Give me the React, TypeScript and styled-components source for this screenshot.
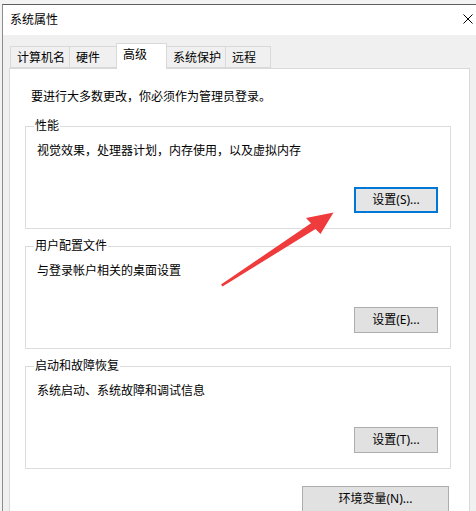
import React from 'react'
import styled, { createGlobalStyle } from 'styled-components'

const GlobalStyle = createGlobalStyle`
    html, body {
        margin: 0;
        padding: 0;
        background: #f3f3f3;
    }
    body {
        font-family: "Noto Sans", "Noto Sans CJK SC", sans-serif;
        font-size: 12px;
        color: #000;
    }
`

const tabs = [
    { label: '计算机名', width: 60 },
    { label: '硬件', width: 48 },
    { label: '高级', width: 51, active: true },
    { label: '系统保护', width: 60 },
    { label: '远程', width: 46 },
]

const groups = [
    { title: '性能', desc: '视觉效果，处理器计划，内存使用，以及虚拟内存', button: '设置(S)...', primary: true },
    { title: '用户配置文件', desc: '与登录帐户相关的桌面设置', button: '设置(E)...' },
    { title: '启动和故障恢复', desc: '系统启动、系统故障和调试信息', button: '设置(T)...' },
]

const App: React.FC = () => {
    return (
        <>
            <GlobalStyle />
            <StPage>
                <StWindow>
                    <StTitleBar>
                        <StTitle>系统属性</StTitle>
                        <StClose aria-label="关闭">
                            <svg width="10" height="10" viewBox="0 0 10 10">
                                <path d="M0.5 0.5 L9.5 9.5 M9.5 0.5 L0.5 9.5" stroke="#000" strokeWidth="1" />
                            </svg>
                        </StClose>
                    </StTitleBar>
                    <StBody>
                        <StTabRow>
                            {tabs.map((t) => (
                                <StTab key={t.label} $active={!!t.active} $width={t.width}>
                                    {t.label}
                                </StTab>
                            ))}
                        </StTabRow>
                        <StPanel>
                            <StIntro>要进行大多数更改，你必须作为管理员登录。</StIntro>
                            {groups.map((g) => (
                                <StGroup key={g.title}>
                                    <StGroupTitle>{g.title}</StGroupTitle>
                                    <StDesc>{g.desc}</StDesc>
                                    <StButtonRow>
                                        <StButton $primary={!!g.primary}>{g.button}</StButton>
                                    </StButtonRow>
                                </StGroup>
                            ))}
                            <StEnvRow>
                                <StEnvButton>环境变量(N)...</StEnvButton>
                            </StEnvRow>
                        </StPanel>
                    </StBody>
                </StWindow>
                <StArrow width="476" height="511" viewBox="0 0 476 511">
                    <polygon
                        points="221,284.5 311,223.3 306,218 333.5,212.5 320.5,234 315.5,229 222.5,286.5"
                        fill="#ef3b3b"
                    />
                </StArrow>
            </StPage>
        </>
    )
}

const StPage = styled.div`
    position: relative;
    width: 476px;
    height: 511px;
    overflow: hidden;
    padding-top: 4px;
    box-sizing: border-box;
`

const StWindow = styled.div`
    margin-left: 2px;
    width: 480px;
    height: 520px;
    border-top: 1px solid #5f5f5f;
    border-left: 1px solid #8c8c8c;
    background: #f0f0f0;
`

const StTitleBar = styled.div`
    height: 30px;
    background: #fff;
    display: flex;
    align-items: center;
    justify-content: space-between;
    padding: 0 0 0 7px;
    width: 473px;
    box-sizing: border-box;
`

const StTitle = styled.span`
    font-size: 12px;
    line-height: 16px;
    margin-top: -1px;
`

const StClose = styled.div`
    width: 46px;
    height: 30px;
    display: flex;
    align-items: center;
    justify-content: center;
    margin-right: -15px;
    margin-top: -2px;
`

const StBody = styled.div`
    padding: 8px 0 0 6px;
`

const StTabRow = styled.div`
    display: flex;
    align-items: flex-end;
    height: 25px;
    padding-left: 2px;
    position: relative;
    z-index: 1;
`

const StTab = styled.div<{ $active: boolean; $width: number }>`
    box-sizing: border-box;
    width: ${(p) => p.$width}px;
    height: ${(p) => (p.$active ? 26 : 22)}px;
    margin-left: -1px;
    margin-bottom: ${(p) => (p.$active ? -1 : 0)}px;
    padding-left: 6px;
    padding-top: 3px;
    line-height: 16px;
    border: 1px solid #d9d9d9;
    border-bottom: ${(p) => (p.$active ? 'none' : '1px solid #d9d9d9')};
    background: ${(p) => (p.$active ? '#fff' : '#f0f0f0')};
    white-space: nowrap;
    position: relative;
    z-index: ${(p) => (p.$active ? 2 : 1)};
`

const StPanel = styled.div`
    width: 461px;
    height: 460px;
    box-sizing: border-box;
    background: #fff;
    border: 1px solid #d9d9d9;
    padding: 20px 18px 0 15px;
`

const StIntro = styled.div`
    line-height: 16px;
    padding-left: 6px;
    margin-bottom: 21px;
`

const StGroup = styled.section`
    display: flex;
    flex-direction: column;
    margin-bottom: 17px;
    padding: 0 12px 15px 11px;
    border: 1px solid #dcdcdc;
`

const StGroupTitle = styled.div`
    align-self: flex-start;
    margin: -9px 0 0 -3px;
    padding: 0 1px;
    background: #fff;
    line-height: 16px;
`

const StDesc = styled.div`
    line-height: 16px;
    margin-top: 9px;
`

const StButtonRow = styled.div`
    display: flex;
    justify-content: flex-end;
    margin-top: 28px;
`

const StButton = styled.div<{ $primary: boolean }>`
    box-sizing: border-box;
    width: 84px;
    height: 26px;
    display: flex;
    align-items: center;
    justify-content: center;
    background: ${(p) => (p.$primary ? '#e5e5e5' : '#e1e1e1')};
    border: 1px solid ${(p) => (p.$primary ? '#0078d7' : '#adadad')};
    box-shadow: ${(p) => (p.$primary ? 'inset 0 0 0 1px #0078d7' : 'none')};
    line-height: 16px;
`

const StEnvRow = styled.div`
    display: flex;
    justify-content: flex-end;
    margin-top: 1px;
    padding-right: 2px;
`

const StEnvButton = styled.div`
    box-sizing: border-box;
    width: 147px;
    height: 26px;
    display: flex;
    align-items: center;
    justify-content: center;
    background: #e1e1e1;
    border: 1px solid #adadad;
    line-height: 16px;
`

const StArrow = styled.svg`
    position: absolute;
    left: 0;
    top: 0;
    pointer-events: none;
`

export default App
